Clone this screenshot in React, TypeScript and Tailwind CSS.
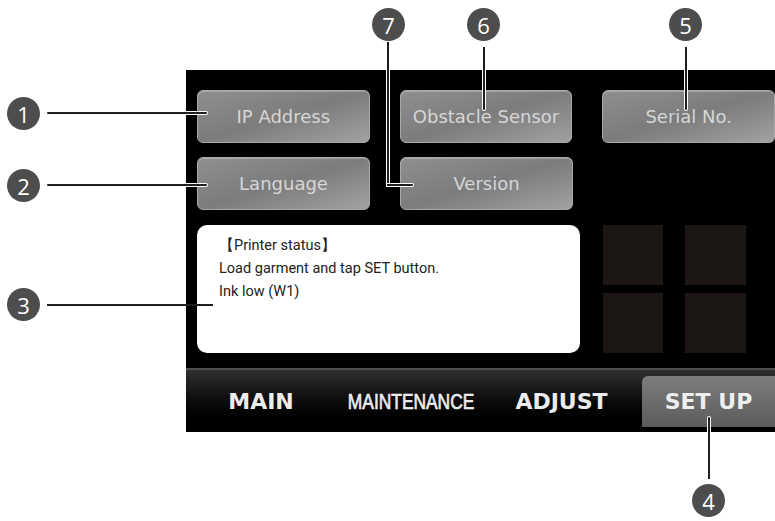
import React from "react";

const btnFont = { fontFamily: '"DejaVu Sans", Verdana, sans-serif' };

function PanelButton({ label }: { label: string }) {
  return (
    <div
      className="w-[173px] h-[53px] rounded-[6px] border border-[#a9a9a9] bg-gradient-to-br from-[#8f8f8f] via-[#7c7c7c] to-[#a2a2a2] shadow-[inset_0_1px_0_rgba(255,255,255,0.25)] flex items-center justify-center text-[18px] text-[#d6d6d6]"
      style={btnFont}
    >
      {label}
    </div>
  );
}

function Badge({ n, className }: { n: number; className: string }) {
  return (
    <div
      className={`absolute w-[33px] h-[33px] rounded-full bg-[#4d4d4d] text-white flex items-center justify-center text-[22px] leading-none ${className}`}
      style={{ fontFamily: '"Open Sans", "Noto Sans", sans-serif' }}
    >
      {n}
    </div>
  );
}

export default function App() {
  return (
    <div className="relative w-[775px] h-[521px] bg-white overflow-hidden pt-[70px] pl-[186px]">
      {/* printer screen */}
      <div className="w-[589px] h-[362px] bg-black flex flex-col pt-[20px]">
        <div className="flex gap-[30px] pl-[11px]">
          <PanelButton label="IP Address" />
          <PanelButton label="Obstacle Sensor" />
          <PanelButton label="Serial No." />
        </div>
        <div className="flex gap-[30px] pl-[11px] mt-[14px]">
          <PanelButton label="Language" />
          <PanelButton label="Version" />
        </div>
        <div className="flex pl-[11px] mt-[15px]">
          <div
            className="w-[383px] h-[128px] bg-white rounded-[10px] pl-[22px] pt-[9px] text-[14.5px] leading-[23px] text-[#222]"
            style={{ fontFamily: 'Roboto, "Noto Sans", sans-serif' }}
          >
            <div>【Printer status】</div>
            <div>Load garment and tap SET button.</div>
            <div>Ink low (W1)</div>
          </div>
          <div className="ml-[23px] grid grid-cols-[60px_61px] grid-rows-[60px_60px] gap-x-[22px] gap-y-[8px]">
            <div className="bg-[#1c1715]" />
            <div className="bg-[#1c1715]" />
            <div className="bg-[#1c1715]" />
            <div className="bg-[#1c1715]" />
          </div>
        </div>
        {/* tab bar */}
        <div
          className="mt-[15px] h-[64px] border-t-2 border-[#4e4e4e] bg-gradient-to-b from-[#303030] to-black flex font-bold text-[22px] text-[#ececec]"
          style={btnFont}
        >
          <div className="w-[150px] flex items-center justify-center">MAIN</div>
          <div className="w-[150px] flex items-center justify-center">
            <span
              className="inline-block scale-x-[0.79] text-[22px] font-normal"
              style={{ fontFamily: '"Liberation Sans", Arial, sans-serif', WebkitTextStroke: "0.7px #ececec" }}
            >
              MAINTENANCE
            </span>
          </div>
          <div className="w-[151px] flex items-center justify-center">ADJUST</div>
          <div className="flex-1 ml-[5px] mt-[6px] mb-[5px] rounded-tl-[6px] bg-gradient-to-b from-[#7d7d7d] to-[#5c5c5c] flex items-center justify-center text-[#eeeeee]">
            SET UP
          </div>
        </div>
      </div>

      {/* callouts */}
      <Badge n={1} className="left-[7px] top-[97px]" />
      <Badge n={2} className="left-[7px] top-[169px]" />
      <Badge n={3} className="left-[7px] top-[288px]" />
      <Badge n={7} className="left-[372px] top-[8px]" />
      <Badge n={6} className="left-[467px] top-[8px]" />
      <Badge n={5} className="left-[669px] top-[8px]" />
      <Badge n={4} className="left-[692px] top-[484px]" />

      <div className="absolute left-[47px] top-[112px] w-[160px] h-[2px] rounded-full bg-[#1f1f1f] shadow-[0_0_0_1px_#fff]" />
      <div className="absolute left-[47px] top-[184px] w-[160px] h-[2px] rounded-full bg-[#1f1f1f] shadow-[0_0_0_1px_#fff]" />
      <div className="absolute left-[47px] top-[304px] w-[166px] h-[2px] bg-[#1f1f1f]" />
      <div className="absolute left-[387px] top-[42px] w-[2px] h-[144px] bg-[#1f1f1f] shadow-[0_0_0_1px_#fff]" />
      <div className="absolute left-[387px] top-[184px] w-[26px] h-[2px] rounded-r-full bg-[#1f1f1f] shadow-[0_0_0_1px_#fff]" />
      <div className="absolute left-[483px] top-[47px] w-[2px] h-[63px] rounded-b-full bg-[#1f1f1f] shadow-[0_0_0_1px_#fff]" />
      <div className="absolute left-[685px] top-[47px] w-[2px] h-[63px] rounded-b-full bg-[#1f1f1f] shadow-[0_0_0_1px_#fff]" />
      <div className="absolute left-[708px] top-[417px] w-[2px] h-[62px] rounded-t-full bg-[#1f1f1f] shadow-[0_0_0_1px_#fff]" />
    </div>
  );
}
